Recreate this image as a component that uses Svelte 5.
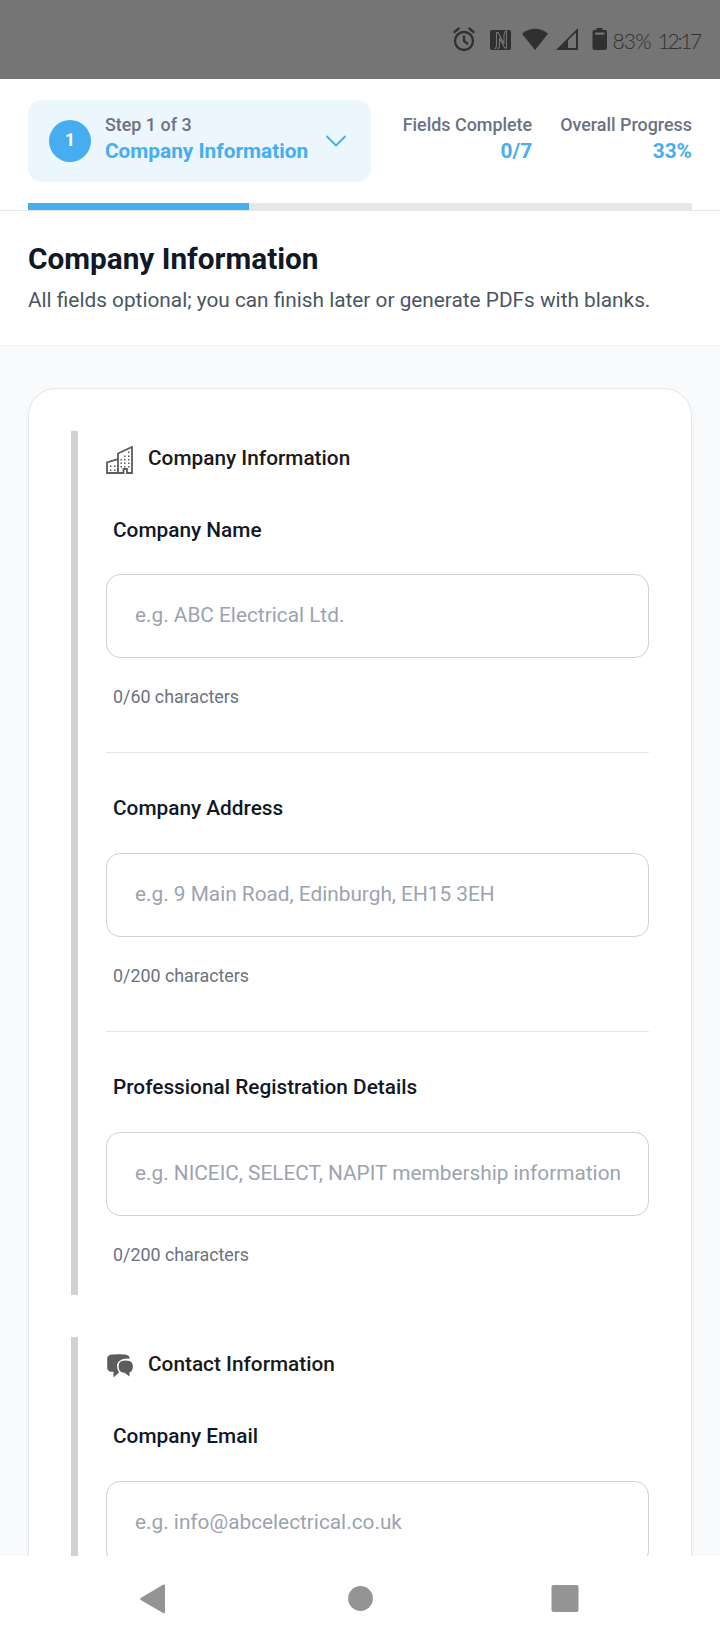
<script lang="ts">
  interface Field {
    id: string;
    label: string;
    placeholder: string;
    max?: number;
  }

  interface Section {
    title: string;
    icon: 'building' | 'chat';
    fields: Field[];
  }

  const TOTAL_STEPS = 3;
  const TOTAL_FIELDS = 7;

  const sections: Section[] = [
    {
      title: 'Company Information',
      icon: 'building',
      fields: [
        { id: 'name', label: 'Company Name', placeholder: 'e.g. ABC Electrical Ltd.', max: 60 },
        { id: 'address', label: 'Company Address', placeholder: 'e.g. 9 Main Road, Edinburgh, EH15 3EH', max: 200 },
        {
          id: 'registration',
          label: 'Professional Registration Details',
          placeholder: 'e.g. NICEIC, SELECT, NAPIT membership information',
          max: 200
        }
      ]
    },
    {
      title: 'Contact Information',
      icon: 'chat',
      fields: [{ id: 'email', label: 'Company Email', placeholder: 'e.g. info@abcelectrical.co.uk' }]
    }
  ];

  // Window positions inside the building icon, left wing first.
  const windows = [
    [4, 19.5], [8, 19.5], [4, 23.5], [8, 23.5],
    [22, 5.5], [18, 9.5], [22, 9.5],
    [14.5, 13], [18, 13], [22, 13],
    [14.5, 16.5], [18, 16.5], [22, 16.5],
    [14.5, 20], [18, 20], [22, 20]
  ];

  let step = $state(1);
  let values: Record<string, string> = $state({ name: '', address: '', registration: '', email: '' });

  let completed = $derived(Object.values(values).filter((v) => v.trim() !== '').length);
  let progress = $derived((step / TOTAL_STEPS) * 100);
</script>

<div class="screen">
  <div class="status-bar">
    <svg class="status-icons" viewBox="0 0 160 28" aria-hidden="true">
      <g fill="none" stroke="#303030" stroke-width="2.300">
        <circle cx="11" cy="16" r="9" />
        <path d="M11 10.5V16l4 3.2M.8 7.6 6.3 3M21.2 7.6 15.7 3" />
      </g>
      <rect x="37" y="5" width="21" height="20" rx="1.8" fill="#303030" />
      <path
        d="M41.500 24q2-1 2-3.500V7.500h1.700L51 19V10q0-3 2.500-4.500M53.500 6v17h-1.800L46.500 13v7.500q0 2.500-2 3.500"
        fill="none"
        stroke="#757575"
        stroke-width="1.100"
      />
      <path d="M82 25 69 8.700C76.500 2.100 87.500 2.100 95 8.700z" fill="#303030" />
      <path d="M103 25 125 3v22z" fill="#303030" />
      <path d="M115 15.300 123 7.500V23h-8z" fill="#757575" />
      <path d="M143.500 5V3h6v2h2.500q2 0 2 2v16q0 2-2 2h-10.500q-2 0-2-2V7q0-2 2-2z" fill="#303030" />
      <path d="M142 7.500h9.500v2.200H142z" fill="#757575" />
    </svg>
    <span class="battery">83%</span>
    <span class="clock">12:17</span>
  </div>

  <header class="header">
    <div class="header-row">
      <button class="step-picker" type="button">
        <span class="step-badge">{step}</span>
        <span class="step-text">
          <span class="caption">Step {step} of {TOTAL_STEPS}</span>
          <span class="value">{sections[0].title}</span>
        </span>
        <svg class="chevron" viewBox="0 0 28 28" aria-hidden="true">
          <path d="m5 9.500 9 9 9-9" />
        </svg>
      </button>

      <div class="stats">
        <div class="stat">
          <span class="caption">Fields Complete</span>
          <span class="value">{completed}/{TOTAL_FIELDS}</span>
        </div>
        <div class="stat">
          <span class="caption">Overall Progress</span>
          <span class="value">{Math.round(progress)}%</span>
        </div>
      </div>
    </div>
    <div class="track">
      <div class="fill" style={`width:${progress}%;`}></div>
    </div>
  </header>

  <div class="intro">
    <h1>Company Information</h1>
    <p>All fields optional; you can finish later or generate PDFs with blanks.</p>
  </div>

  <main>
    <form class="card">
      {#each sections as section}
        <section>
          <h2>
            {#if section.icon === 'building'}
              <svg class="section-icon" viewBox="0 0 28 28" aria-hidden="true">
                <path
                  class="outline"
                  d="M1 27V16.500L12 13V7.500L26 1v26h-5v-4h-3.500v4zM12 13v14"
                />
                {#each windows as [x, y]}
                  <rect {x} {y} width="1.500" height="1.500" />
                {/each}
              </svg>
            {:else}
              <svg class="section-icon" viewBox="0 0 28 28" aria-hidden="true">
                <path
                  d="M4.500 2.800C9 2 16 2 20.500 2.800Q23.500 3.500 24 6.500C15.500 5.800 11 9.500 11 14Q11 17.500 13 20.500L7.500 25.500V19.800H4.500Q1.800 19.300 1.200 16V6.500Q1.500 3.500 4.500 2.800z"
                />
                <path
                  d="M16 8.900Q19.700 8.100 23.500 8.900 26.500 10 26.800 13V16Q26.500 19 23.500 20.500V24.500L18.600 20.700Q13.500 20.700 12.700 16V13Q13.200 9.600 16 8.900z"
                />
              </svg>
            {/if}
            {section.title}
          </h2>

          {#each section.fields as field}
            <div class="field">
              <label for={field.id}>{field.label}</label>
              <input id={field.id} placeholder={field.placeholder} maxlength={field.max} bind:value={values[field.id]} />
              {#if field.max}
                <small>{values[field.id].length}/{field.max} characters</small>
              {/if}
            </div>
          {/each}
        </section>
      {/each}
    </form>
  </main>

  <nav class="nav-bar" aria-label="System navigation">
    <svg viewBox="0 0 30 30" aria-hidden="true">
      <path d="M2.700 14 25 .700Q27 0 27 1.700v26.600q0 1.700-2 .700L2.700 16q-1.400-1 0-2z" />
    </svg>
    <svg viewBox="0 0 30 30" aria-hidden="true"><circle cx="16.500" cy="14.500" r="12.400" /></svg>
    <svg viewBox="0 0 30 30" aria-hidden="true"><rect x="1.500" y="1" width="27" height="27" rx="2" /></svg>
  </nav>
</div>

<style>
  :global(body) {
    background: #f8fafc;
  }

  .screen {
    display: flex;
    flex-direction: column;
    width: 720px;
    height: 1640px;
    overflow: hidden;
    background: #f8fafc;
    font-family: Roboto, sans-serif;
    font-size: 20.8px;
  }

  .status-bar {
    display: flex;
    flex: none;
    align-items: center;
    justify-content: flex-end;
    height: 79px;
    padding: 0 20px 2px 0;
    box-sizing: border-box;
    background: #757575;
    color: #303030;
    font-family: Lato, sans-serif;
    font-size: 21px;
    font-weight: 300;
  }

  .status-icons {
    width: 160px;
    height: 28px;
    margin-right: -1px;
  }

  .battery {
    padding-top: 4px;
    letter-spacing: -0.8px;
  }

  .clock {
    margin-left: 7px;
    padding-top: 4px;
    letter-spacing: -2.3px;
  }

  .header {
    flex: none;
    padding: 21px 28px 0;
    border-bottom: 1px solid #e5e7eb;
    background: #fff;
  }

  .header-row {
    display: flex;
    justify-content: space-between;
  }

  .step-picker {
    display: flex;
    align-items: center;
    gap: 14px;
    padding: 12px 21px;
    border: 0;
    border-radius: 14px;
    background: #ebf6fd;
    font: inherit;
    text-align: left;
  }

  .step-badge {
    width: 42px;
    height: 42px;
    border-radius: 50%;
    background: #46aef0;
    color: #fff;
    font-size: 17.5px;
    font-weight: 700;
    line-height: 40px;
    text-align: center;
  }

  .step-text {
    display: flex;
    flex-direction: column;
    padding-bottom: 6px;
  }

  .caption {
    color: #6b7280;
    font-size: 17.9px;
    font-weight: 500;
    line-height: 26px;
  }

  .value {
    color: #46aef0;
    font-weight: 700;
    line-height: 26px;
  }

  .chevron {
    width: 28px;
    height: 28px;
    fill: none;
    stroke: #46aef0;
    stroke-width: 1.8;
    stroke-linecap: round;
    stroke-linejoin: round;
  }

  .stats {
    display: flex;
    gap: 28px;
    padding-top: 12px;
  }

  .stat {
    display: flex;
    flex-direction: column;
    text-align: right;
  }

  .track {
    height: 7px;
    margin-top: 21px;
    margin-bottom: -1px;
    border-bottom: 1px solid #e5e7eb;
    background: #e5e7eb;
  }

  .fill {
    height: 7px;
    background: #46aef0;
  }

  .intro {
    flex: none;
    padding: 28px 28px 29px;
    border-bottom: 1px solid #f3f4f6;
    background: #fff;
  }

  h1 {
    margin: 0 0 6px;
    color: #111827;
    font-size: 29.75px;
    font-weight: 700;
    line-height: 39px;
  }

  .intro p {
    margin: 0;
    color: #4b5563;
    line-height: 32px;
    white-space: nowrap;
  }

  main {
    flex: 1;
    min-height: 0;
    padding: 42px 28px 0;
    overflow: hidden;
  }

  .card {
    padding: 42px;
    border: 1px solid #e5e7eb;
    border-radius: 28px;
    background: #fff;
    box-shadow: 0 2px 4px rgba(0, 0, 0, 0.04);
  }

  section {
    padding: 0 0 26px 28px;
    border-left: 7px solid #d1d1d1;
  }

  section + section {
    margin-top: 42px;
  }

  h2 {
    display: flex;
    align-items: center;
    gap: 14px;
    height: 54px;
    margin: 0 0 31px;
    color: #1a1a1a;
    font-size: 20.8px;
    font-weight: 500;
  }

  .section-icon {
    width: 28px;
    height: 28px;
    margin-top: 4px;
    fill: #5c5c5c;
  }

  .outline {
    fill: none;
    stroke: #5c5c5c;
    stroke-width: 1.8;
  }

  .field {
    display: flex;
    flex-direction: column;
  }

  .field + .field {
    margin-top: 41px;
    padding-top: 41px;
    border-top: 1px solid #e5e7eb;
  }

  label {
    padding-left: 7px;
    margin-bottom: 30px;
    color: #111827;
    font-weight: 500;
    line-height: 28px;
  }

  .field + .field label,
  section + section label {
    margin-bottom: 31px;
  }

  input {
    height: 84px;
    padding: 0 26px 2px 28px;
    box-sizing: border-box;
    border: 1px solid #d1d1d1;
    border-radius: 14px;
    background: #fff;
    color: #111827;
    font: inherit;
  }

  input::placeholder {
    color: #9ca3af;
    opacity: 1;
  }

  small {
    padding-left: 7px;
    margin-top: 25px;
    color: #6b7280;
    font-size: 17.85px;
    line-height: 28px;
  }

  .nav-bar {
    display: flex;
    flex: none;
    justify-content: space-between;
    height: 84px;
    padding: 28px 140px 0 138px;
    box-sizing: border-box;
    background: #fff;
  }

  .nav-bar svg {
    width: 30px;
    height: 30px;
    fill: #949494;
  }
</style>
